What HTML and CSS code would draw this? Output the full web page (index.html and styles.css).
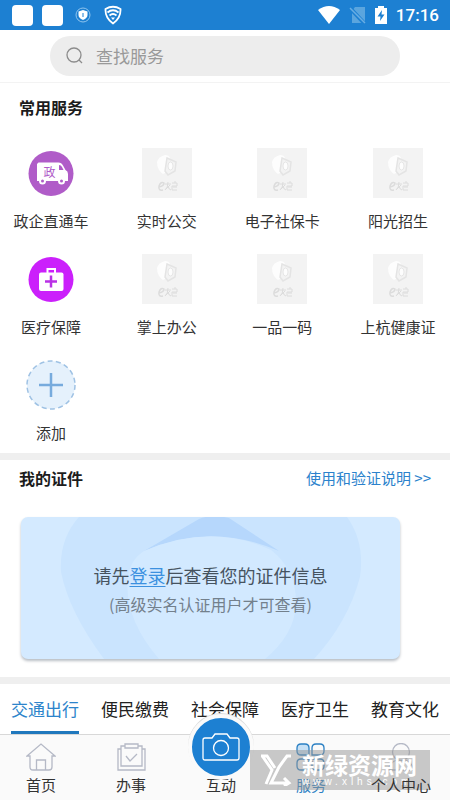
FILE: index.html
```html
<!DOCTYPE html>
<html lang="zh-CN">
<head>
<meta charset="utf-8">
<meta name="viewport" content="width=device-width, initial-scale=1">
<title>服务</title>
<link rel="stylesheet" href="styles.css">
</head>
<body>
<svg width="0" height="0" class="defs" aria-hidden="true">
  <symbol id="placeholder" viewBox="0 0 50 50">
    <path fill="#fdfdfd" d="M15 14q1-5 8-7 4 0 5 3l-3 14-4 2q-6-4-6-12z"/>
    <path fill="#f3f3f3" stroke="#e4e4e4" stroke-width="1.5" d="M25 10l9 4-1 9-7 4-3-4z"/>
    <ellipse cx="28.500" cy="18" rx="2.5" ry="4" fill="#fdfdfd" stroke="#e6e6e6"/>
    <g fill="none" stroke="#dcdcdc"><path stroke-width="1.500" d="M17 39q5-1 5-4-3-2-5 3-1 5 4 4"/><path d="M23 36h6M26 34q0 6-3 8M26 38q1 4 3 4M28 37l-4 4M30 35h5v3h-5v4h5M31 39h4M33 33v2"/></g>
  </symbol>
</svg>
<div class="app">
  <header class="status">
    <div class="status-side">
      <span class="app-dot"></span><span class="app-dot"></span>
      <svg class="shield-ring" width="16" height="16" viewBox="0 0 16 16"><circle cx="8" cy="8" r="7" fill="none" stroke="#8fc4ee"/><path fill="#fff" d="M8 3l4.500 1.500v3.500q0 3-4.500 5-4.500-2-4.500-5V4.500z"/><path d="M8 6v4" stroke="#1d80d2"/></svg>
      <svg width="18" height="20" viewBox="0 0 18 20" fill="none" stroke="#fff" stroke-width="1.800"><path d="M1.500 4Q9-.5 16.500 4 17 13 9 18.500 1 13 1.500 4z"/><path d="M3.500 7.500Q9 3 14.500 7.500M5.500 10.500Q9 7.500 12.500 10.500"/><path d="M7 12.500h4l-2 2.500z" fill="#fff" stroke="none"/></svg>
    </div>
    <div class="status-side status-right">
      <svg width="22" height="18" viewBox="0 0 22 18"><path fill="#fff" d="M0 4Q11-4 22 4L11 18z"/></svg>
      <svg width="17" height="18" viewBox="0 0 17 18"><path fill="#5ba5de" d="M6 1h10v16H3V5z"/><path d="M0 1l16 17" stroke="#1d80d2" stroke-width="4"/><path d="M1 2l15 15" stroke="#69ade3" stroke-width="1.500"/></svg>
      <svg width="12" height="18" viewBox="0 0 12 18"><path fill="#fff" d="M3 2V0h6v2h3v16H0V2z"/><path fill="#1d80d2" d="M7 4L2.500 10.500h3L5 15l4.500-6.500h-3z"/></svg>
      <time>17:16</time>
    </div>
  </header>
  <form class="search-bar">
    <label class="search">
      <svg width="18" height="18" viewBox="0 0 18 18" fill="none" stroke="#8c8c8c" stroke-width="1.300"><circle cx="8" cy="8" r="7"/><path d="M13 13l3 3"/></svg>
      <input type="search" placeholder="查找服务" aria-label="查找服务">
    </label>
  </form>
  <main>
    <section class="services">
      <h2>常用服务</h2>
      <div class="grid">
        <a class="service" href="#"><svg class="icon" viewBox="0 0 50 50"><circle cx="25" cy="25.500" r="22.500" fill="#b05cc8"/><path fill="#fff" d="M12.500 14.500h20q3 0 4.500 3l2.500 4.500q2.500 1 2.500 4v7h-3a3.500 3.500 0 0 1-7 0H20a3.500 3.500 0 0 1-7 0h-2V16z"/><path fill="#b05cc8" d="M33 17q2 0 3 2l1.500 3H33z"/><circle cx="16.500" cy="33" r="1.500" fill="#b05cc8"/><circle cx="35.500" cy="33" r="1.500" fill="#b05cc8"/><text x="23.500" y="28.500" text-anchor="middle" class="van-text">政</text></svg><span>政企直通车</span></a>
        <a class="service" href="#"><svg class="icon placeholder"><use href="#placeholder"/></svg><span>实时公交</span></a>
        <a class="service" href="#"><svg class="icon placeholder"><use href="#placeholder"/></svg><span>电子社保卡</span></a>
        <a class="service" href="#"><svg class="icon placeholder"><use href="#placeholder"/></svg><span>阳光招生</span></a>
        <a class="service" href="#"><svg class="icon" viewBox="0 0 50 50"><circle cx="25" cy="25.500" r="22.500" fill="#cb20fb"/><rect x="13" y="18.500" width="24.500" height="18.500" rx="2" fill="#fff"/><path d="M21.500 19v-4h7.500v4" fill="none" stroke="#fff" stroke-width="2"/><path d="M25 21.500v12M19 27.500h12" stroke="#b930e6" stroke-width="2.500"/></svg><span>医疗保障</span></a>
        <a class="service" href="#"><svg class="icon placeholder"><use href="#placeholder"/></svg><span>掌上办公</span></a>
        <a class="service" href="#"><svg class="icon placeholder"><use href="#placeholder"/></svg><span>一品一码</span></a>
        <a class="service" href="#"><svg class="icon placeholder"><use href="#placeholder"/></svg><span>上杭健康证</span></a>
        <a class="service" href="#"><svg class="icon" viewBox="0 0 50 50"><circle cx="25" cy="25" r="24" fill="#e5f1fc" stroke="#9fc2e4" stroke-width="1.500" stroke-dasharray="5 3.380"/><path d="M25 13v24M13 25h24" stroke="#77abdd" stroke-width="2.500"/></svg><span>添加</span></a>
      </div>
    </section>
    <section class="cards">
      <div class="section-head"><h2>我的证件</h2><a href="#">使用和验证说明 &gt;&gt;</a></div>
      <div class="card">
        <svg class="card-art" viewBox="0 0 379 142" preserveAspectRatio="none" aria-hidden="true"><path fill="#cae4fe" d="M58 0H326Q344 25 339 60 327 105 293 142H83Q48 95 40 55 38 22 58 0z"/><path fill="#b6d7fc" d="M178 2Q190-3 208 1L258 34Q190 5 123 34z"/><path fill="#d2e9ff" d="M123 34Q190 5 250 33q26 20 25 55-2 30-31 54H138Q102 100 107 60q2-17 16-26z"/></svg>
        <p class="card-title">请先<a href="#">登录</a>后查看您的证件信息</p>
        <p class="card-note">(高级实名认证用户才可查看)</p>
      </div>
    </section>
    <nav class="tabs">
      <a class="active" href="#">交通出行</a><a href="#">便民缴费</a><a href="#">社会保障</a><a href="#">医疗卫生</a><a href="#">教育文化</a>
    </nav>
  </main>
  <nav class="bottom">
    <a href="#"><svg width="30" height="28" viewBox="0 0 30 28"><path d="M1 13L15 1l14 12h-3v11q0 3-3 3H7q-3 0-3-3V13zM10.500 27V17h9v10"/></svg><span>首页</span></a>
    <a href="#"><svg width="30" height="28" viewBox="0 0 30 28"><path d="M9 3H5v20h21V3h-4M9 1h13v4H9zM5 6H2v21h27V6h-3M10 13l4 5 7-7"/></svg><span>办事</span></a>
    <a class="center" href="#"><span class="camera"><svg width="38" height="30" viewBox="0 0 38 30"><path d="M3 6h7l3-4h12l3 4h7q2 0 2 2v18q0 2-2 2H3q-2 0-2-2V8q0-2 2-2z"/><circle cx="19" cy="16" r="7.500"/></svg></span><span>互动</span></a>
    <a class="current" href="#"><svg width="30" height="28" viewBox="0 0 30 28"><path fill="#c6e0f5" d="M1 5q0-4 4-4h4q4 0 4 4v7H5q-4 0-4-4z"/><path d="M16 12V5q0-4 4-4h4q4 0 4 4v3q0 4-4 4zM1 20q0-4 4-4h8v7q0 4-4 4H5q-4 0-4-4zM16 16h8q4 0 4 4v3q0 4-4 4h-4q-4 0-4-4z"/></svg><span>服务</span></a>
    <a class="profile" href="#"><svg width="30" height="28" viewBox="0 0 30 28"><circle cx="15" cy="9" r="8.500"/><path d="M2 27q2-8 9-10M28 27q-2-8-9-10M2 27h26"/></svg><span>个人中心</span></a>
  </nav>
  <aside class="watermark">
    <svg width="32" height="32" viewBox="0 0 32 32" fill="none" stroke="#fff" stroke-width="3"><path d="M1 2h6l8 12M3 3l9 13-6 14M31 2h-4l-8 11-8 16h18M24 24l5 5-5 3"/></svg>
    <div><strong>新绿资源网</strong><small>www.xlhs.com</small></div>
  </aside>
</div>
</body>
</html>
```
FILE: styles.css
```css
* { box-sizing: border-box; }
body {
  margin: 0;
  background: #fff;
  color: #333;
  font-family: "Noto Sans CJK SC", sans-serif;
  font-size: 15px;
  line-height: 24px;
}
a { color: inherit; text-decoration: none; }
h2, p { margin: 0; }
h2 { font-size: 16px; font-weight: 700; line-height: 24px; color: #1c1c1c; }
svg { display: block; flex: none; }
.defs { position: absolute; }
.app { position: relative; min-height: 100vh; display: flex; flex-direction: column; }
main { flex: 1; }

.status {
  height: 30px;
  padding: 0 11px 0 12px;
  display: flex;
  align-items: center;
  justify-content: space-between;
  background: #1d80d2;
  color: #fff;
}
.status-side { display: flex; align-items: center; gap: 9px; }
.status-side .shield-ring { margin: 0 4px 0 3px; }
.app-dot { width: 21px; height: 21px; border-radius: 4px; background: #fff; }
time { font-family: Roboto, sans-serif; font-size: 17px; font-weight: 500; }

.search-bar { padding: 6px 50px; border-bottom: 1px solid #f3f3f3; }
.search {
  height: 40px;
  padding: 0 16px;
  display: flex;
  align-items: center;
  gap: 12px;
  border-radius: 20px;
  background: #ededed;
}
.search input {
  flex: 1;
  min-width: 0;
  padding: 0;
  border: 0;
  outline: 0;
  background: none;
  font: inherit;
  font-size: 17px;
}
.search input::placeholder { color: #999; opacity: 1; }

.services { padding: 12px 12px 8px 11px; border-bottom: 7px solid #efefef; }
.services h2 { margin: 0 8px 29px; }
.grid {
  display: grid;
  grid-template-columns: repeat(4, 80px);
  justify-content: space-between;
  row-gap: 21px;
}
.service {
  display: flex;
  flex-direction: column;
  align-items: center;
  gap: 11px;
  white-space: nowrap;
}
.icon { width: 50px; height: 50px; }
.placeholder { background: #f3f3f3; }
.van-text { font-family: "Noto Sans CJK SC", sans-serif; font-size: 12px; fill: #b05cc8; }

.cards { padding: 6px 19px 18px; border-bottom: 7px solid #efefef; }
.section-head { display: flex; justify-content: space-between; align-items: center; }
.section-head a { color: #2b82cc; }
.card {
  position: relative;
  height: 142px;
  margin: 27px 31px 0 2px;
  padding-top: 45px;
  overflow: hidden;
  border-radius: 7px;
  background: #d4eaff;
  box-shadow: 0 2px 3px #b9bec4;
  text-align: center;
}
.card-art { position: absolute; inset: 0; width: 100%; height: 100%; }
.card-title, .card-note { position: relative; white-space: nowrap; }
.card-title { font-size: 18px; line-height: 26px; color: #46535f; }
.card-title a { color: #3c91df; text-decoration: underline; text-decoration-thickness: 1px; text-underline-offset: 3px; }
.card-note { margin-top: 4px; font-size: 16px; color: #73808c; }

.tabs { height: 50px; padding: 0 11px; display: flex; gap: 22px; font-size: 17px; white-space: nowrap; color: #222; }
.tabs a { height: 50px; line-height: 50px; }
.tabs .active { color: #2d84cb; border-bottom: 3px solid #2078bd; }

.bottom {
  height: 66px;
  padding-top: 8px;
  display: grid;
  grid-template-columns: repeat(5, 1fr);
  border-top: 1px solid #d8d8d8;
  background: #fafafa;
}
.bottom a { display: flex; flex-direction: column; align-items: center; padding-right: 8px; white-space: nowrap; }
.bottom svg { fill: none; stroke: #b5b9c6; stroke-width: 1.3; margin-bottom: 2px; }
.bottom .current { color: #2b80c4; }
.bottom .current svg { stroke: #2b80c4; }
.bottom .profile span { position: relative; z-index: 2; }
.bottom .center { position: relative; padding-top: 30px; }
.camera {
  position: absolute;
  top: -29px;
  width: 66px;
  height: 66px;
  display: flex;
  align-items: center;
  justify-content: center;
  border: 4px solid #fafafa;
  border-radius: 50%;
  background: #1d80d2;
  box-shadow: 0 -1px 0 #dcdcdc;
}
.bottom .camera svg { margin: 0; stroke: #fff; }

.watermark {
  position: absolute;
  z-index: 1;
  right: 20px;
  bottom: 10px;
  width: 180px;
  height: 40px;
  display: flex;
  align-items: center;
  gap: 10px;
  padding-left: 10px;
  background: rgba(150, 150, 150, 0.5);
  color: #fff;
}
.watermark div { display: flex; flex-direction: column; }
.watermark strong { font-size: 23px; line-height: 24px; }
.watermark small { font-family: "Liberation Sans", sans-serif; font-size: 10px; line-height: 12px; letter-spacing: 4px; }
```
